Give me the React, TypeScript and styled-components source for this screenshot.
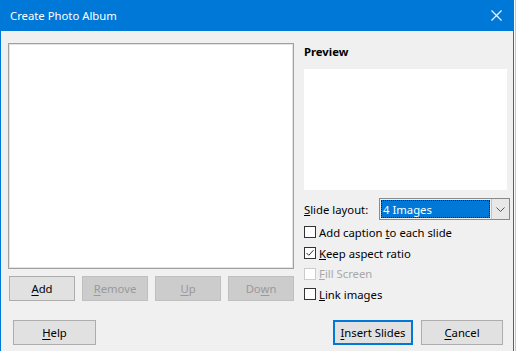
import React from 'react'
import styled, { createGlobalStyle } from 'styled-components'

const Global = createGlobalStyle`
  html, body {
    margin: 0;
    padding: 0;
    background: #fafafa;
    font-family: "Noto Sans", "Liberation Sans", sans-serif;
    font-size: 11.3px;
    color: #000;
  }
`

const Page = styled.div`
  width: 516px;
  height: 351px;
  overflow: hidden;
  display: flex;
`

const Dialog = styled.div`
  width: 512px;
  height: 351px;
  background: #f0f0f0;
  border-left: 1px solid #0078d7;
  border-right: 1px solid #0078d7;
  display: flex;
  flex-direction: column;
`

const Edge = styled.div`
  width: 1px;
  margin-left: 1px;
  background: #c8c8c8;
`

const TitleBar = styled.div`
  height: 31px;
  background: #0078d7;
  color: #fff;
  display: flex;
  align-items: center;
  justify-content: space-between;
  padding: 0 11px 0 9px;
`

const Body = styled.div`
  display: flex;
  padding: 12px 0 0 7px;
  gap: 10px;
`

const LeftColumn = styled.div`
  width: 286px;
  display: flex;
  flex-direction: column;
  gap: 7px;
`

const ListBox = styled.div`
  height: 224px;
  background: #fff;
  border: 1px solid #a0a0a0;
  box-shadow: inset 0 0 0 1px #e3e3e3;
`

const ButtonRow = styled.div`
  display: flex;
  gap: 7px;
  padding-left: 1px;
`

const Button = styled.button<{ $width: number; $default?: boolean }>`
  width: ${p => p.$width}px;
  height: 25px;
  box-sizing: border-box;
  font-family: inherit;
  font-size: 11.3px;
  padding: 0;
  color: #000;
  background: #e1e1e1;
  border: 1px solid #adadad;
  ${p => p.$default && `border: 2px solid #0078d7;`}
  &:disabled {
    background: #cccccc;
    border-color: #bfbfbf;
    color: #9a9a9a;
  }
  u {
    text-decoration-thickness: 1px;
    text-underline-offset: 2px;
  }
`

const RightColumn = styled.div`
  width: 206px;
  display: flex;
  flex-direction: column;
  padding-top: 1px;
`

const Heading = styled.div`
  font-weight: bold;
  height: 16px;
  line-height: 16px;
`

const PreviewBox = styled.div`
  margin-top: 9px;
  width: 203px;
  height: 121px;
  background: #fff;
`

const LayoutRow = styled.div`
  margin-top: 8px;
  display: flex;
  align-items: center;
  justify-content: space-between;
  height: 22px;
  white-space: nowrap;
`

const Select = styled.div`
  width: 131px;
  height: 22px;
  flex-shrink: 0;
  box-sizing: border-box;
  border: 1px solid #8a8a8a;
  display: flex;
`

const SelectValue = styled.div`
  flex: 1;
  background: #0078d7;
  color: #fff;
  border: 1px dotted #222;
  margin: 1px;
  display: flex;
  align-items: center;
  padding-left: 1px;
`

const SelectArrow = styled.div`
  width: 17px;
  background: #e8e8e8;
  border-left: 1px solid #c4c4c4;
  display: flex;
  align-items: center;
  justify-content: center;
`

const Checks = styled.div`
  margin-top: 2px;
  display: flex;
  flex-direction: column;
`

const CheckRow = styled.div<{ $disabled?: boolean }>`
  height: 20.7px;
  display: flex;
  align-items: center;
  gap: 3px;
  white-space: nowrap;
  color: ${p => (p.$disabled ? '#a8a8a8' : '#000')};
`

const Box = styled.span<{ $disabled?: boolean }>`
  width: 12px;
  height: 12px;
  box-sizing: border-box;
  background: #fff;
  border: 1px solid ${p => (p.$disabled ? '#cccccc' : '#333')};
  display: flex;
  align-items: center;
  justify-content: center;
`

const Footer = styled.div`
  display: flex;
  align-items: center;
  padding: 15px 10px 0 12px;
`

const Spacer = styled.div`
  flex: 1;
`

const FooterRight = styled.div`
  display: flex;
  gap: 8px;
`

const Check = ({ label, checked, disabled }: { label: React.ReactNode; checked?: boolean; disabled?: boolean }) => (
  <CheckRow $disabled={disabled}>
    <Box $disabled={disabled}>
      {checked && (
        <svg width="10" height="10" viewBox="0 0 10 10">
          <path d="M1.5 5 L3.8 7.3 L8.5 2.2" fill="none" stroke="#333" strokeWidth="1" />
        </svg>
      )}
    </Box>
    <span>{label}</span>
  </CheckRow>
)

export default function App() {
  return (
    <Page>
      <Global />
      <Dialog>
        <TitleBar>
          <span>Create Photo Album</span>
          <svg width="11" height="11" viewBox="0 0 11 11">
            <path d="M0.5 0.5 L10.5 10.5 M10.5 0.5 L0.5 10.5" stroke="#fff" strokeWidth="1.1" />
          </svg>
        </TitleBar>
        <Body>
          <LeftColumn>
            <ListBox />
            <ButtonRow>
              <Button $width={67}><u>A</u>dd</Button>
              <Button $width={67} disabled><u>R</u>emove</Button>
              <Button $width={67} disabled><u>U</u>p</Button>
              <Button $width={67} disabled>Do<u>w</u>n</Button>
            </ButtonRow>
          </LeftColumn>
          <RightColumn>
            <Heading>Preview</Heading>
            <PreviewBox />
            <LayoutRow>
              <span><u>S</u>lide layout:</span>
              <Select>
                <SelectValue>4 Images</SelectValue>
                <SelectArrow>
                  <svg width="9" height="5" viewBox="0 0 9 5">
                    <path d="M0.5 0.5 L4.5 4.5 L8.5 0.5" fill="none" stroke="#555" strokeWidth="1" />
                  </svg>
                </SelectArrow>
              </Select>
            </LayoutRow>
            <Checks>
              <Check label={<>Add caption <u>t</u>o each slide</>} />
              <Check label={<><u>K</u>eep aspect ratio</>} checked />
              <Check label={<><u>F</u>ill Screen</>} disabled />
              <Check label={<><u>L</u>ink images</>} />
            </Checks>
          </RightColumn>
        </Body>
        <Footer>
          <Button $width={83}><u>H</u>elp</Button>
          <Spacer />
          <FooterRight>
            <Button $width={80} $default><u>I</u>nsert Slides</Button>
            <Button $width={82}><u>C</u>ancel</Button>
          </FooterRight>
        </Footer>
      </Dialog>
      <Edge />
    </Page>
  )
}
